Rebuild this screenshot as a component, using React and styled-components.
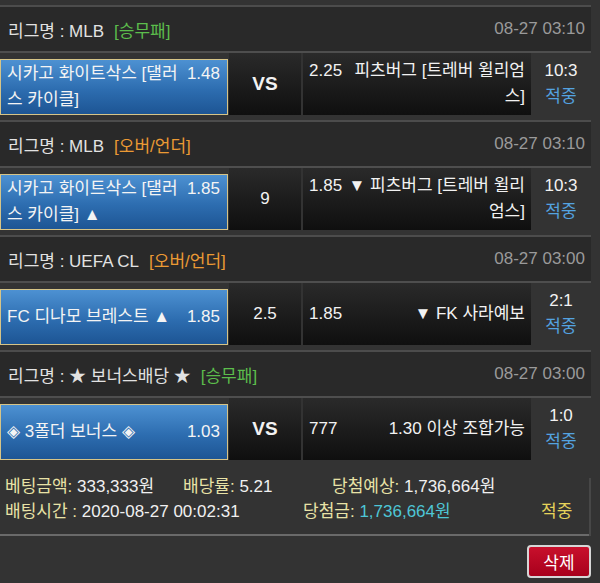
import React from "react";
import styled, { createGlobalStyle } from "styled-components";

const Global = createGlobalStyle`
  html, body { margin: 0; padding: 0; background: #333333; }
  body { font-family: "Liberation Sans", "Noto Sans CJK KR", sans-serif; color: #e6e6e6; }
`;

const Page = styled.div`
  position: relative;
  width: 591px;
  height: 583px;
  padding-top: 5px;
  box-sizing: border-box;
  overflow: hidden;
`;

const Block = styled.section`
  border-top: 2px solid #4c4c4c;
  margin-bottom: 5px;
`;

const Header = styled.div`
  height: 44px;
  display: flex;
  align-items: center;
  justify-content: space-between;
  padding: 0 6px 0 8px;
  background: #292929;
  border-bottom: 2px solid #4e4e4e;
`;

const League = styled.div`
  font-size: 17px;
  color: #e2e2e2;
  display: flex;
  align-items: center;
  gap: 10px;
`;

const Kind = styled.span`
  color: ${(p) => (p.$tone === "green" ? "#5cbd4c" : "#eb9a34")};
`;

const Date = styled.div`
  font-size: 17px;
  color: #9a9a9a;
`;

const BetRow = styled.div`
  display: grid;
  grid-template-columns: 229px 72px 230px 60px;
  height: 62px;
`;

const Home = styled.div`
  align-self: end;
  height: 56px;
  box-sizing: border-box;
  display: flex;
  align-items: center;
  padding: 0 7px 0 6px;
  background: linear-gradient(#4d91d2, #2d6db0 55%, #1d5594);
  border: 1.5px solid #d6c487;
  margin-right: 1px;
  color: #f4f4f4;
`;

const Line = styled.div`
  flex: 1;
  display: flex;
  align-items: baseline;
  justify-content: space-between;
  font-size: 17px;
  line-height: 26px;
`;

const Name = styled.div`
  width: ${(p) => p.$w}px;
  text-align: ${(p) => (p.$right ? "right" : "left")};
`;

const Dark = styled.div`
  background: linear-gradient(#2a2a2a, #0f0f0f);
  display: flex;
  align-items: center;
`;

const Middle = styled(Dark)`
  justify-content: center;
  font-size: ${(p) => (p.$vs ? "19px" : "17px")};
  font-weight: ${(p) => (p.$vs ? 700 : 400)};
  color: #f2f2f2;
`;

const Away = styled(Dark)`
  padding: 0 6px 0 6px;
  border-left: 2px solid #333333;
  color: #f2f2f2;
`;

const Score = styled.div`
  display: flex;
  flex-direction: column;
  align-items: center;
  justify-content: center;
  gap: 1px;
  font-size: 17px;
  color: #f2f2f2;
`;

const Hit = styled.span`
  font-size: 17px;
  color: #54a3e0;
`;

const Summary = styled.div`
  padding: 7px 0 0 5px;
  height: 71px;
  box-sizing: border-box;
  border-bottom: 2px solid #6a6a6a;
`;

const SumRow = styled.div`
  display: flex;
  height: 25px;
  align-items: center;
  font-size: 17px;
`;

const Item = styled.div`
  width: ${(p) => (p.$w ? `${p.$w}px` : "auto")};
  white-space: nowrap;
  color: ${(p) => p.$color || "#f0f0f0"};
`;

const Label = styled.span`
  color: #e8e2a6;
`;

const Value = styled.span`
  color: ${(p) => p.$color || "#f0f0f0"};
`;

const Footer = styled.div`
  display: flex;
  justify-content: flex-end;
  padding-top: 9px;
`;

const Delete = styled.button`
  width: 64px;
  height: 33px;
  border: 2px solid #d6d6d6;
  border-radius: 4px;
  background: linear-gradient(#c8102c, #a8001c);
  color: #fff;
  font-family: "Liberation Sans", "Noto Sans CJK KR", sans-serif;
  font-size: 17px;
  padding: 0;
`;

const Thumb = styled.div`
  position: absolute;
  left: 589px;
  top: 478px;
  width: 2px;
  height: 58px;
  background: #474747;
`;

const bets = [
  {
    league: "MLB",
    kind: "[승무패]",
    tone: "green",
    date: "08-27 03:10",
    home: "시카고 화이트삭스 [댈러스 카이클]",
    homeOdds: "1.48",
    mid: "VS",
    vs: true,
    awayOdds: "2.25",
    away: "피츠버그 [트레버 윌리엄스]",
    score: "10:3",
  },
  {
    league: "MLB",
    kind: "[오버/언더]",
    tone: "orange",
    date: "08-27 03:10",
    home: "시카고 화이트삭스 [댈러스 카이클] ▲",
    homeOdds: "1.85",
    mid: "9",
    awayOdds: "1.85",
    away: "▼ 피츠버그 [트레버 윌리엄스]",
    score: "10:3",
  },
  {
    league: "UEFA CL",
    kind: "[오버/언더]",
    tone: "orange",
    date: "08-27 03:00",
    home: "FC 디나모 브레스트 ▲",
    homeOdds: "1.85",
    mid: "2.5",
    awayOdds: "1.85",
    away: "▼ FK 사라예보",
    score: "2:1",
  },
  {
    league: "★ 보너스배당 ★",
    kind: "[승무패]",
    tone: "green",
    date: "08-27 03:00",
    home: "◈ 3폴더 보너스 ◈",
    homeOdds: "1.03",
    mid: "VS",
    vs: true,
    awayOdds: "777",
    away: "1.30 이상 조합가능",
    score: "1:0",
  },
];

export default function App() {
  return (
    <Page>
      <Global />
      {bets.map((b, i) => (
        <Block key={i}>
          <Header>
            <League>
              <span>리그명 : {b.league}</span>
              <Kind $tone={b.tone}>{b.kind}</Kind>
            </League>
            <Date>{b.date}</Date>
          </Header>
          <BetRow>
            <Home>
              <Line>
                <Name $w={172}>{b.home}</Name>
                <span>{b.homeOdds}</span>
              </Line>
            </Home>
            <Middle $vs={b.vs}>{b.mid}</Middle>
            <Away>
              <Line>
                <span>{b.awayOdds}</span>
                <Name $w={182} $right>{b.away}</Name>
              </Line>
            </Away>
            <Score>
              <span>{b.score}</span>
              <Hit>적중</Hit>
            </Score>
          </BetRow>
        </Block>
      ))}
      <Summary>
        <SumRow>
          <Item $w={178}>
            <Label>베팅금액: </Label>
            <Value>333,333원</Value>
          </Item>
          <Item $w={149}>
            <Label>배당률: </Label>
            <Value>5.21</Value>
          </Item>
          <Item>
            <Label>당첨예상: </Label>
            <Value>1,736,664원</Value>
          </Item>
        </SumRow>
        <SumRow>
          <Item $w={298}>
            <Label>배팅시간 : </Label>
            <Value>2020-08-27 00:02:31</Value>
          </Item>
          <Item $w={238}>
            <Label>당첨금: </Label>
            <Value $color="#4ec6d6">1,736,664원</Value>
          </Item>
          <Item $color="#e6d35a">적중</Item>
        </SumRow>
      </Summary>
      <Footer>
        <Delete>삭제</Delete>
      </Footer>
      <Thumb />
    </Page>
  );
}
